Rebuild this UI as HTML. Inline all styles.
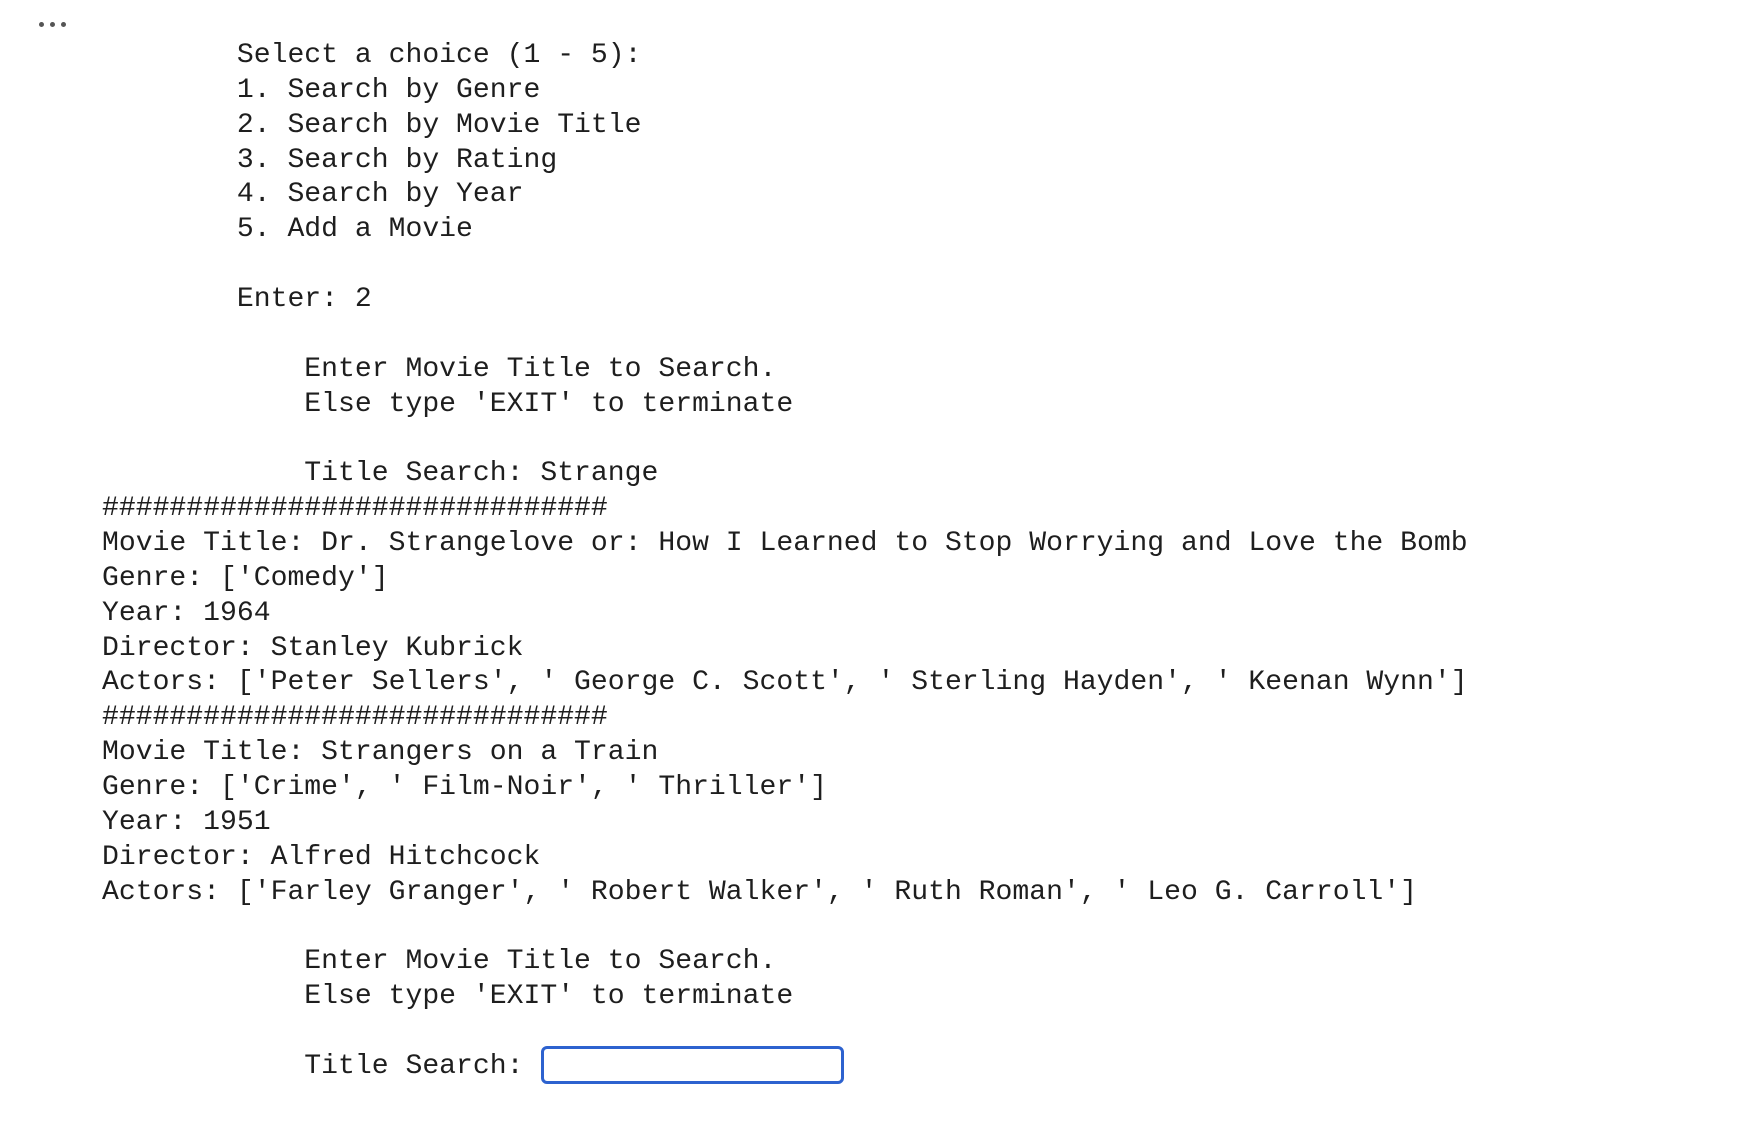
<!DOCTYPE html>
<html><head><meta charset="utf-8"><style>
html,body{margin:0;padding:0;background:#fff;width:1740px;height:1142px;overflow:hidden}
pre{position:absolute;left:102px;top:39px;margin:0;font-family:"Liberation Mono",monospace;font-size:28.1px;line-height:34.86px;color:#1e1e1e}
.dots{position:absolute;left:39px;top:14px}
.dots i{display:inline-block;width:5px;height:5px;border-radius:50%;background:#555;margin-right:6px}
.box{position:absolute;left:547px;top:1058px;width:298px;height:32px;border:3px solid #2d62cf;border-radius:6px}
</style></head><body>
<div class="dots"><i></i><i></i><i></i></div>
<pre>        Select a choice (1 - 5):
        1. Search by Genre
        2. Search by Movie Title
        3. Search by Rating
        4. Search by Year
        5. Add a Movie

        Enter: 2

            Enter Movie Title to Search.
            Else type 'EXIT' to terminate

            Title Search: Strange
##############################
Movie Title: Dr. Strangelove or: How I Learned to Stop Worrying and Love the Bomb
Genre: ['Comedy']
Year: 1964
Director: Stanley Kubrick
Actors: ['Peter Sellers', ' George C. Scott', ' Sterling Hayden', ' Keenan Wynn']
##############################
Movie Title: Strangers on a Train
Genre: ['Crime', ' Film-Noir', ' Thriller']
Year: 1951
Director: Alfred Hitchcock
Actors: ['Farley Granger', ' Robert Walker', ' Ruth Roman', ' Leo G. Carroll']

            Enter Movie Title to Search.
            Else type 'EXIT' to terminate

            Title Search:</pre>
<div class="box" style="left:541px;top:1046px;width:297px"></div>
</body></html>
